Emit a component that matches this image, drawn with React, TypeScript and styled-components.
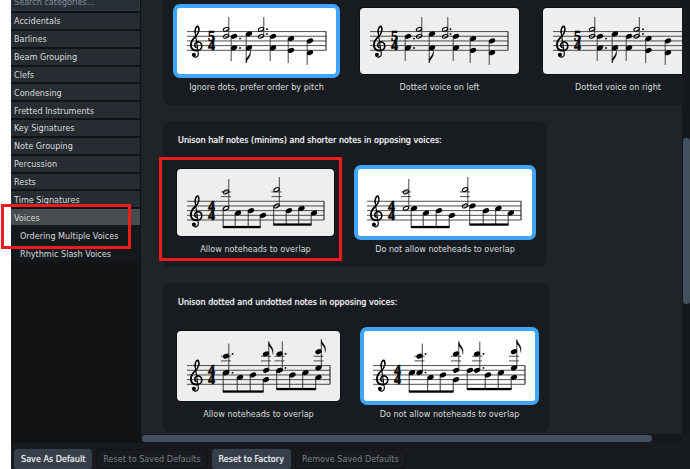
import React, { useState } from "react";
import styled, { createGlobalStyle } from "styled-components";

const GlobalStyle = createGlobalStyle`
  * { box-sizing: border-box; }
  html, body, #root { height: 100%; }
  body {
    margin: 0;
    overflow: hidden;
    background: #ffffff;
    font-family: "DejaVu Sans Condensed", "Noto Sans", sans-serif;
    font-size: 9px;
    line-height: 12px;
    color: #d9dbdd;
  }
  button, input { font: inherit; color: inherit; }
`;

const Window = styled.div`
  height: 100vh;
  margin-left: 11px;
  display: flex;
  flex-direction: column;
  background: #171a1e;
`;

const Body = styled.div`
  flex: 1;
  min-height: 0;
  display: flex;
`;

const Sidebar = styled.nav`
  flex: 0 0 130px;
  background: #121315;
`;

const Search = styled.input`
  display: block;
  width: 129px;
  height: 19px;
  margin: -8px 0 1px;
  padding: 1px 2px 0;
  border: 1px solid #2f3842;
  background: #272f38;
  outline: none;
  &::placeholder { color: #88909a; opacity: 1; }
`;

const CategoryList = styled.div`
  display: grid;
  grid-auto-rows: 1fr;
  height: 214px;
  width: 129px;
`;

const Category = styled.button<{ $active?: boolean }>`
  border: 0;
  border-top: 1px solid #101214;
  border-bottom: 1px solid ${(p) => (p.$active ? "#15181b" : "#101214")};
  background: ${(p) => (p.$active ? "#474c4f" : "#272c32")};
  padding: 2px 3px 0;
  text-align: left;
  line-height: 13px;
`;

const SubList = styled.div`
  position: relative;
  width: 129px;
  background: #15181b;
`;

const SubItem = styled.button`
  display: block;
  width: 100%;
  height: 18px;
  border: 0;
  padding: 1px 9px 0;
  background: transparent;
  text-align: left;
`;

const Highlight = styled.div`
  position: absolute;
  border: 3px solid #ee1c1c;
  pointer-events: none;
  z-index: 2;
`;

const VoicesHighlight = styled(Highlight)`
  left: -10px;
  right: 9px;
  top: -22px;
  height: 45px;
`;

const OptionHighlight = styled(Highlight)`
  inset: -12px -8px -6px -18px;
`;

const Main = styled.main`
  flex: 1;
  min-width: 0;
  display: grid;
  grid-template-columns: minmax(0, 1fr) 8px;
  grid-template-rows: minmax(0, 1fr) 9px;
`;

const Pane = styled.div`
  background: #1f2427;
  overflow: hidden;
  padding-left: 22px;
  display: flex;
  flex-direction: column;
  align-items: flex-start;
  gap: 16px;
`;

const Track = styled.div<{ $vertical?: boolean }>`
  background: #15181c;
  padding: ${(p) => (p.$vertical ? "138px 0 0 1px" : "1px 0 1px 1px")};
`;

const Thumb = styled.div<{ $vertical?: boolean }>`
  width: ${(p) => (p.$vertical ? "7px" : "94.5%")};
  height: ${(p) => (p.$vertical ? "166px" : "7px")};
  border-radius: 3px;
  background: #43505d;
`;

const Card = styled.fieldset<{ $scrolled?: boolean }>`
  flex: none;
  width: max-content;
  min-width: 0;
  margin: ${(p) => (p.$scrolled ? "-4px" : "0")} 0 0;
  padding: 12px 14px;
  border: 0;
  border-radius: ${(p) => (p.$scrolled ? "0 0 8px 8px" : "8px")};
  background: #181b1f;
`;

const CardTitle = styled.legend`
  float: left;
  width: 100%;
  padding: 0 1px;
  margin-bottom: 22px;
  line-height: 14px;
  color: #f4f5f6;
  text-shadow: 0 0 1px #c8cacc;
`;

const Options = styled.div`
  clear: both;
  display: flex;
  gap: 24px;
`;

const Option = styled.label`
  position: relative;
  display: flex;
  flex-direction: column;
  align-items: center;
  gap: 7px;
`;

const Radio = styled.input`
  position: absolute;
  inset: 0;
  margin: 0;
  opacity: 0;
`;

const Picture = styled.svg<{ $selected: boolean }>`
  display: block;
  border-radius: ${(p) => (p.$selected ? "3px" : "4px")};
  background: ${(p) => (p.$selected ? "#ffffff" : "#eeeeee")};
  box-shadow: 0 0 0 ${(p) => (p.$selected ? "4px #3fa5fa" : "1px #0d0f11")};
`;

const Digit = styled.text`
  font: bold 14px "Liberation Serif", serif;
  text-anchor: middle;
  stroke: #000;
  stroke-width: 0.5px;
`;

const Footer = styled.footer`
  display: flex;
  gap: 4px;
  padding: 6px 3px 0;
`;

const Action = styled.button`
  height: 20px;
  padding: 0 6px;
  border: 1px solid #38434e;
  border-radius: 3px;
  background: #363f49;
  color: #f4f5f6;
  text-shadow: 0 0 1px #a8acb0;
  white-space: nowrap;
  &:disabled {
    border-color: #101214;
    background: #171a1e;
    color: #7d8084;
    text-shadow: none;
  }
`;

type Chord = {
  x: number;
  at: number[];
  tip: number;
  half?: boolean;
  flag?: boolean;
  dots?: [number, number[]];
};
type Beam = { y: number; notes: [number, number][] };
type Score = {
  width: number;
  height: number;
  staff: [number, number];
  base: number;
  beats: string;
  chords: Chord[];
  beams?: Beam[];
};

const STEP = 2.34;

/* Staff positions count half spaces upwards from the bottom line. */
function Notation({ score, selected }: { score: Score; selected: boolean }) {
  const { width, height, staff, base, beats, chords, beams = [] } = score;
  const y = (p: number) => base - p * STEP;
  const head = (x: number, p: number, half?: boolean) => (
    <ellipse
      key={`${x}/${p}`}
      cx={x}
      cy={y(p)}
      rx={half ? 2.8 : 3.3}
      ry={half ? 1.7 : 2.3}
      transform={`rotate(-24 ${x} ${y(p)})`}
      fill={half ? "none" : "#000"}
      stroke={half ? "#000" : "none"}
      strokeWidth={1.1}
    />
  );
  return (
    <Picture $selected={selected} width={width} height={height} viewBox={`0 0 ${width} ${height}`} aria-hidden="true">
      <g stroke="#222" strokeWidth="0.8">
        {[0, 2, 4, 6, 8].map((p) => (
          <line key={p} x1={staff[0]} x2={staff[1]} y1={y(p)} y2={y(p)} />
        ))}
        <line x1={staff[1]} x2={staff[1]} y1={y(8)} y2={y(0)} strokeWidth="1.1" />
      </g>
      <g transform={`translate(${staff[0] + 3} ${y(2)})`} fill="none" stroke="#000" strokeLinecap="round">
        <path d="M5.2-13 8.3 7.8C8.8 11.4 4.6 12.8 3 10" strokeWidth="1.1" />
        <path d="M5.2-13C4.6-17 7-20 8.2-19.2 9.6-16.5 8.8-12.5 5.5-9" strokeWidth="1.5" />
        <path d="M5.5-9C2-6 .7-3.5.9 0 1.2 3.5 4 5 7 4.9" strokeWidth="1.9" />
        <path d="M7 4.9C10.5 4.8 12 2.5 11.8 0 11.6-3 8.5-4.6 6.2-3.2 4.2-2 4.2.8 6.2 2" strokeWidth="1.6" />
        <circle cx="3.9" cy="9.2" r="2" fill="#000" stroke="none" />
      </g>
      <Digit x={staff[0] + 24.5} y={y(4)}>{beats}</Digit>
      <Digit x={staff[0] + 24.5} y={y(0)}>4</Digit>
      {chords.map((c) => {
        const up = c.tip < y(Math.max(...c.at));
        const sx = c.x + (up ? 2.8 : -2.8);
        const from = up ? y(Math.min(...c.at)) : y(Math.max(...c.at));
        const top = Math.max(...c.at);
        return (
          <g key={`${c.x}-${top}`}>
            <line x1={sx} x2={sx} y1={from} y2={c.tip} stroke="#333" strokeWidth="0.9" />
            {c.at.map((p) => head(c.x, p, c.half))}
            {[10, 12].filter((p) => p <= top).map((p) => (
              <line key={p} x1={c.x - 5} x2={c.x + 5} y1={y(p)} y2={y(p)} stroke="#222" strokeWidth="0.8" />
            ))}
            {c.dots && c.dots[1].map((p) => <circle key={p} cx={c.dots![0]} cy={y(p)} r="0.95" />)}
            {c.flag && (
              <path
                transform={`translate(${sx} ${c.tip}) scale(1 ${up ? 1 : -1})`}
                d="M0 0C.5 4 5.8 5.5 4 13 4.2 9 2.4 6.6 0 4.6Z"
                stroke="#000"
                strokeWidth="0.3"
              />
            )}
          </g>
        );
      })}
      {beams.map((b) => {
        const first = b.notes[0][0] - 2.8;
        const last = b.notes[b.notes.length - 1][0] - 2.8;
        return (
          <g key={first}>
            {b.notes.map(([x, p]) => (
              <line key={x} x1={x - 2.8} x2={x - 2.8} y1={y(p)} y2={b.y} stroke="#222" strokeWidth="0.9" />
            ))}
            {b.notes.map(([x, p], i) =>
              chords.some((c) => c.half && c.x === x && i === 0) ? null : head(x, p)
            )}
            <rect x={first - 0.4} y={b.y - 1.1} width={last - first + 0.8} height="2.3" />
          </g>
        );
      })}
    </Picture>
  );
}

const dotted = { width: 159, height: 66, base: 42.3, beats: "5" };
const overlapStaff = { height: 67, base: 51, beats: "4" };
const dottedStaff = { height: 70, base: 53.3, beats: "4" };

type Choice = { label: string; score: Score; marked?: boolean };
type Group = { title?: string; initial: number; choices: Choice[] };

const groups: Group[] = [
  {
    initial: 0,
    choices: [
      {
        label: "Ignore dots, prefer order by pitch",
        score: {
          ...dotted,
          staff: [10, 149],
          chords: [
            { x: 49, at: [9, 6], tip: 9, half: true },
            { x: 57, at: [6, 1], tip: 53, dots: [63, [5, 1]] },
            { x: 72, at: [7, 1], tip: 55, flag: true },
            { x: 84, at: [9, 6], tip: 9, half: true, dots: [90, [9, 7]] },
            { x: 96, at: [6, 1], tip: 53 },
            { x: 114, at: [5, 0], tip: 55 },
            { x: 133, at: [4, -1], tip: 57 },
          ],
        },
      },
      {
        label: "Dotted voice on left",
        score: {
          ...dotted,
          staff: [10, 148],
          chords: [
            { x: 48, at: [6, 1], tip: 53, dots: [54, [5, 1]] },
            { x: 59, at: [9, 6], tip: 9, half: true },
            { x: 72, at: [7, 1], tip: 55, flag: true },
            { x: 85, at: [9, 6], tip: 9, half: true, dots: [90.5, [9, 7]] },
            { x: 96, at: [6, 1], tip: 53 },
            { x: 113, at: [5, 0], tip: 55 },
            { x: 132, at: [4, -1], tip: 57 },
          ],
        },
      },
      {
        label: "Dotted voice on right",
        score: {
          ...dotted,
          width: 150,
          staff: [10, 142],
          chords: [
            { x: 49, at: [9, 6], tip: 9, half: true },
            { x: 57, at: [6, 1], tip: 53, dots: [63, [5, 1]] },
            { x: 72, at: [7, 1], tip: 55, flag: true },
            { x: 86, at: [6, 1], tip: 53 },
            { x: 93.5, at: [9, 6], tip: 9, half: true, dots: [100, [9, 7]] },
            { x: 105.5, at: [5, 0], tip: 55 },
            { x: 125, at: [4, -1], tip: 57 },
          ],
        },
      },
    ],
  },
  {
    title: "Unison half notes (minims) and shorter notes in opposing voices:",
    initial: 1,
    choices: [
      {
        label: "Allow noteheads to overlap",
        marked: true,
        score: {
          ...overlapStaff,
          width: 157,
          staff: [10, 147],
          chords: [
            { x: 49, at: [12, 5], tip: 10, half: true },
            { x: 99.5, at: [13, 6], tip: 8, half: true },
          ],
          beams: [
            { y: 58, notes: [[49, 5], [61, 3], [74, 4], [86, 2]] },
            { y: 55.5, notes: [[99.5, 6], [112, 4], [124.5, 5], [137, 3]] },
          ],
        },
      },
      {
        label: "Do not allow noteheads to overlap",
        score: {
          ...overlapStaff,
          width: 174,
          staff: [9, 163],
          chords: [
            { x: 48, at: [12, 5], tip: 10, half: true },
            { x: 107, at: [13, 6], tip: 8, half: true },
          ],
          beams: [
            { y: 58, notes: [[56, 5], [68, 3], [81, 4], [94, 2]] },
            { y: 55.5, notes: [[114.5, 6], [128, 4], [140.5, 5], [153, 3]] },
          ],
        },
      },
    ],
  },
  {
    title: "Unison dotted and undotted notes in opposing voices:",
    initial: 1,
    choices: [
      {
        label: "Allow noteheads to overlap",
        score: {
          ...dottedStaff,
          width: 163,
          staff: [10, 153],
          chords: [
            { x: 49, at: [12, 5], tip: 12.5, dots: [55.5, [13, 5]] },
            { x: 89, at: [13, 6], tip: 10.5, flag: true },
            { x: 102.5, at: [13, 6], tip: 10.5, dots: [108.5, [13, 7]] },
            { x: 141.5, at: [14, 7], tip: 8.5, flag: true },
          ],
          beams: [
            { y: 60.5, notes: [[49, 5], [63, 3], [76, 4], [89, 2]] },
            { y: 58, notes: [[102.5, 6], [115.5, 4], [128.5, 5], [141.5, 3]] },
          ],
        },
      },
      {
        label: "Do not allow noteheads to overlap",
        score: {
          ...dottedStaff,
          width: 171,
          staff: [9, 161],
          chords: [
            { x: 55.5, at: [12, 5], tip: 12.5, dots: [61.5, [13, 5]] },
            { x: 92, at: [13, 6], tip: 10.5, flag: true },
            { x: 113, at: [13, 6], tip: 10.5, dots: [119.5, [13, 7]] },
            { x: 150, at: [14, 7], tip: 8.5, flag: true },
          ],
          beams: [
            { y: 60.5, notes: [[48, 5], [66.5, 3], [79, 4], [92, 2]] },
            { y: 58, notes: [[106, 6], [124, 4], [137, 5], [150, 3]] },
          ],
        },
      },
    ],
  },
];

function OptionCard({ group, name }: { group: Group; name: string }) {
  const [selected, setSelected] = useState(group.initial);
  return (
    <Card $scrolled={!group.title}>
      {group.title && <CardTitle>{group.title}</CardTitle>}
      <Options>
        {group.choices.map((choice, i) => (
          <Option key={choice.label}>
            <Radio type="radio" name={name} checked={selected === i} onChange={() => setSelected(i)} />
            <Notation score={choice.score} selected={selected === i} />
            <span>{choice.label}</span>
            {choice.marked && <OptionHighlight />}
          </Option>
        ))}
      </Options>
    </Card>
  );
}

const categories = [
  "Accidentals", "Barlines", "Beam Grouping", "Clefs", "Condensing", "Fretted Instruments",
  "Key Signatures", "Note Grouping", "Percussion", "Rests", "Time Signatures", "Voices",
];

export default function App() {
  return (
    <>
      <GlobalStyle />
      <Window>
        <Body>
          <Sidebar>
            <Search type="search" aria-label="Search categories" placeholder="Search categories..." />
            <CategoryList>
              {categories.map((name) => (
                <Category key={name} type="button" $active={name === "Voices"}>{name}</Category>
              ))}
            </CategoryList>
            <SubList>
              <SubItem type="button">Ordering Multiple Voices</SubItem>
              <SubItem type="button">Rhythmic Slash Voices</SubItem>
              <VoicesHighlight />
            </SubList>
          </Sidebar>
          <Main>
            <Pane>
              {groups.map((group, i) => (
                <OptionCard key={i} group={group} name={`option-${i}`} />
              ))}
            </Pane>
            <Track $vertical><Thumb $vertical /></Track>
            <Track><Thumb /></Track>
          </Main>
        </Body>
        <Footer>
          <Action type="button">Save As Default</Action>
          <Action type="button" disabled>Reset to Saved Defaults</Action>
          <Action type="button">Reset to Factory</Action>
          <Action type="button" disabled>Remove Saved Defaults</Action>
        </Footer>
      </Window>
    </>
  );
}
